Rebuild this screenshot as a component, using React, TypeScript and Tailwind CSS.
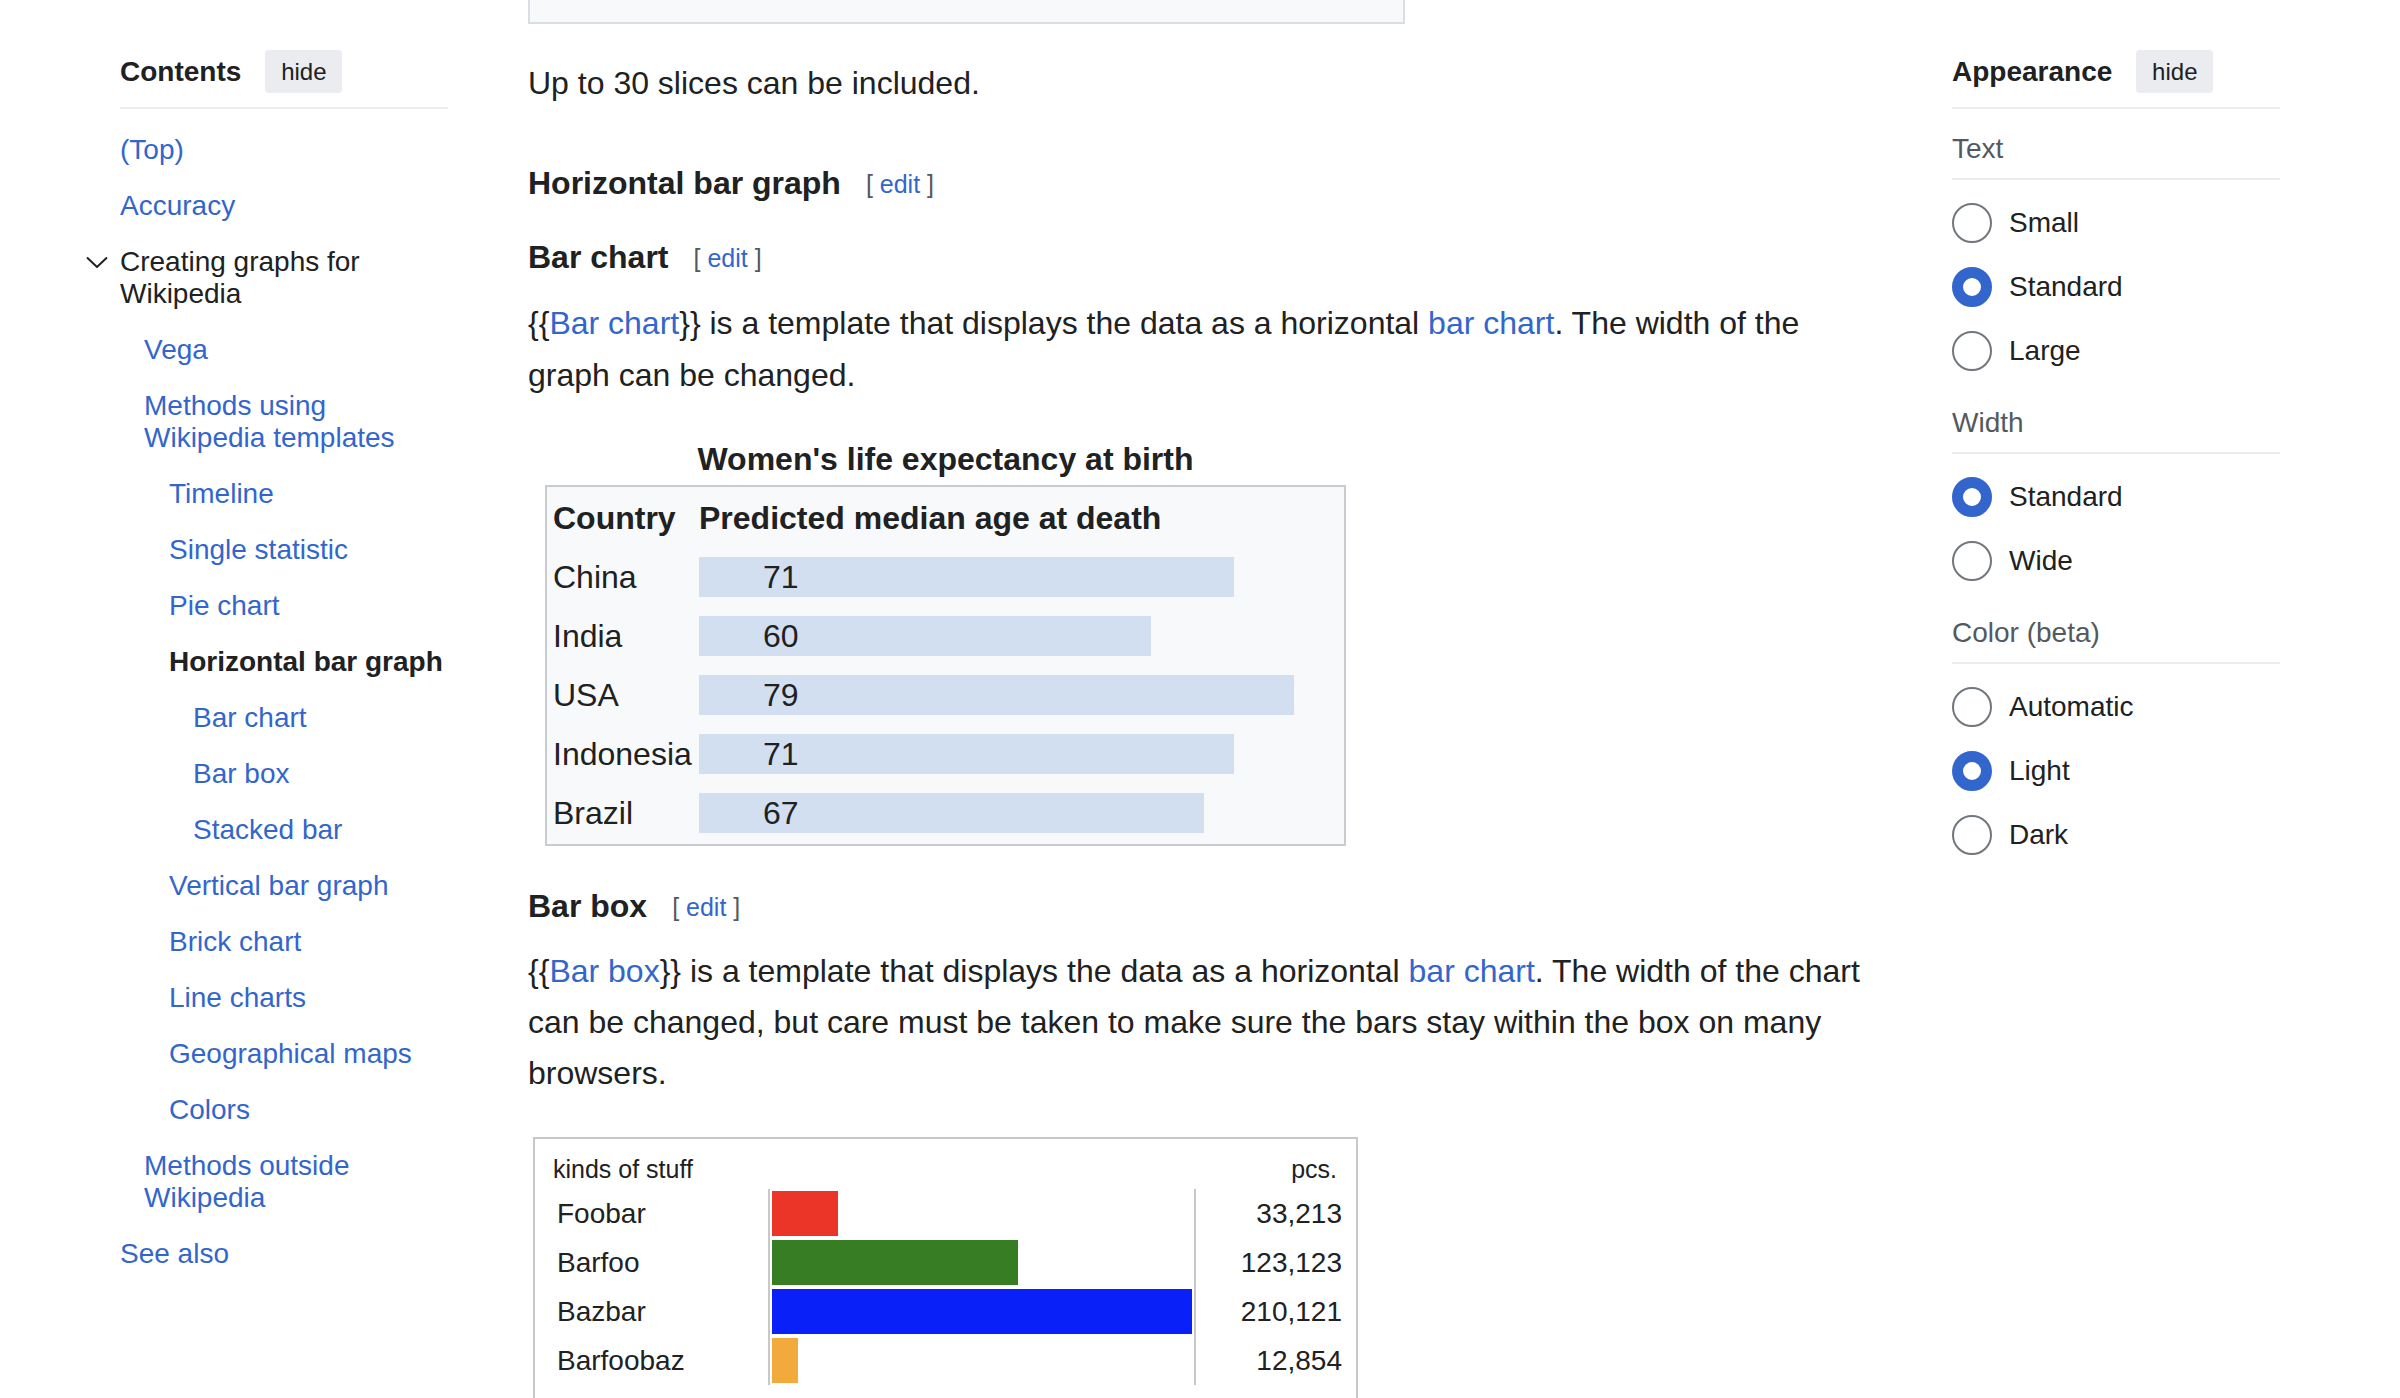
import React from 'react';

const toc = [
  { label: '(Top)', level: 1 },
  { label: 'Accuracy', level: 1 },
  { label: 'Creating graphs for Wikipedia', level: 1, parent: true },
  { label: 'Vega', level: 2 },
  { label: 'Methods using Wikipedia templates', level: 2 },
  { label: 'Timeline', level: 3 },
  { label: 'Single statistic', level: 3 },
  { label: 'Pie chart', level: 3 },
  { label: 'Horizontal bar graph', level: 3, active: true },
  { label: 'Bar chart', level: 4 },
  { label: 'Bar box', level: 4 },
  { label: 'Stacked bar', level: 4 },
  { label: 'Vertical bar graph', level: 3 },
  { label: 'Brick chart', level: 3 },
  { label: 'Line charts', level: 3 },
  { label: 'Geographical maps', level: 3 },
  { label: 'Colors', level: 3 },
  { label: 'Methods outside Wikipedia', level: 2 },
  { label: 'See also', level: 1 },
];

const indent: Record<number, string> = {
  1: 'pl-0',
  2: 'pl-[24px]',
  3: 'pl-[49px]',
  4: 'pl-[73px]',
};

const lifeExpectancy = [
  { country: 'China', age: 71 },
  { country: 'India', age: 60 },
  { country: 'USA', age: 79 },
  { country: 'Indonesia', age: 71 },
  { country: 'Brazil', age: 67 },
];

const stuff = [
  { name: 'Foobar', width: 66, color: 'bg-[#ea3528]', pcs: '33,213' },
  { name: 'Barfoo', width: 246, color: 'bg-[#377d23]', pcs: '123,123' },
  { name: 'Bazbar', width: 420, color: 'bg-[#0a20f8]', pcs: '210,121' },
  { name: 'Barfoobaz', width: 26, color: 'bg-[#f2aa3d]', pcs: '12,854' },
];

const HideButton = () => (
  <button className="h-[43px] w-[77px] rounded-[4px] bg-[#eaecf0] text-[24px] text-[#202122]">hide</button>
);

const PanelHeader = ({ title }: { title: string }) => (
  <>
    <div className="flex h-[43px] items-center gap-[24px]">
      <span className="text-[28px] font-bold text-[#202122]">{title}</span>
      <HideButton />
    </div>
    <div className="mt-[14px] h-[2px] bg-[#eaecf0]" />
  </>
);

const Heading = ({ title, className }: { title: string; className: string }) => (
  <div className={`flex items-center h-[48px] ${className}`}>
    <span className="text-[32px] font-bold text-[#202122]">{title}</span>
    <span className="ml-[25px] pt-[3px] text-[25px] text-[#54595d]">
      [ <span className="text-[#3366cc]">edit</span> ]
    </span>
  </div>
);

const Radio = ({ label, checked }: { label: string; checked?: boolean }) => (
  <div className="flex h-[40px] items-center">
    <span
      className={
        checked
          ? 'h-[40px] w-[40px] shrink-0 rounded-full border-[11px] border-[#3366cc] bg-white'
          : 'h-[40px] w-[40px] shrink-0 rounded-full border-2 border-[#72777d] bg-white'
      }
    />
    <span className="ml-[17px] text-[28px] text-[#202122]">{label}</span>
  </div>
);

const OptionGroup = ({ title, options, selected, first }: { title: string; options: string[]; selected: string; first?: boolean }) => (
  <div className={first ? 'mt-[24px]' : 'mt-[36px]'}>
    <div className="text-[28px] leading-[32px] text-[#54595d]">{title}</div>
    <div className="mt-[13px] h-[2px] bg-[#eaecf0]" />
    <div className="mt-[23px] flex flex-col gap-[24px]">
      {options.map((o) => (
        <Radio key={o} label={o} checked={o === selected} />
      ))}
    </div>
  </div>
);

export default function App() {
  return (
    <div className="h-[1398px] overflow-hidden bg-white font-['Liberation_Sans',Arial,sans-serif] text-[#202122]">
      <div className="flex pl-[120px]">
        {/* Contents */}
        <aside className="w-[328px] shrink-0 pt-[50px]">
          <PanelHeader title="Contents" />
          <ul className="mt-[13px]">
            {toc.map((item) => (
              <li key={item.label} className={`py-[12px] text-[28px] leading-[32px] ${indent[item.level]}`}>
                {item.parent ? (
                  <div className="-ml-[34px] flex">
                    <span className="flex h-[32px] w-[34px] shrink-0 items-center">
                      <svg width="22" height="12" viewBox="0 0 22 12" fill="none">
                        <path d="M1 1.5 L11 11 L21 1.5" stroke="#202122" strokeWidth="2" />
                      </svg>
                    </span>
                    <span className="text-[#202122]">{item.label}</span>
                  </div>
                ) : item.active ? (
                  <span className="font-bold text-[#202122]">{item.label}</span>
                ) : (
                  <span className="text-[#3366cc]">{item.label}</span>
                )}
              </li>
            ))}
          </ul>
        </aside>

        {/* Article */}
        <main className="ml-[80px] w-[1345px] shrink-0">
          <div className="h-[24px] w-[877px] border-2 border-t-0 border-[#dadde3] bg-[#f8f9fa]" />
          <p className="mt-[33px] text-[32px] leading-[52px]">Up to 30 slices can be included.</p>

          <Heading title="Horizontal bar graph" className="mt-[50px]" />
          <Heading title="Bar chart" className="mt-[26px]" />
          <p className="mt-[16px] text-[32px] leading-[52px]">
            {'{{'}
            <span className="text-[#3366cc]">Bar chart</span>
            {'}}'} is a template that displays the data as a horizontal{' '}
            <span className="text-[#3366cc]">bar chart</span>. The width of the graph can be changed.
          </p>

          <div className="ml-[17px] mt-[34px] w-[801px]">
            <div className="text-center text-[32px] font-bold leading-[48px]">Women's life expectancy at birth</div>
            <div className="mt-[2px] border-2 border-[#c8ccd1] bg-[#f8f9fa] py-[2px] text-[32px]">
              <div className="flex h-[58px] items-center font-bold">
                <span className="w-[152px] pl-[6px]">Country</span>
                <span>Predicted median age at death</span>
              </div>
              {lifeExpectancy.map((r) => (
                <div key={r.country} className="flex h-[59px] items-center">
                  <span className="w-[152px] shrink-0 pl-[6px]">{r.country}</span>
                  <div className="flex h-[40px] items-center bg-[#d2dff0]" style={{ width: r.age * 7.53 }}>
                    <span className="pl-[64px]">{r.age}</span>
                  </div>
                </div>
              ))}
            </div>
          </div>

          <Heading title="Bar box" className="mt-[36px]" />
          <p className="mt-[16px] text-[32px] leading-[51px]">
            {'{{'}
            <span className="text-[#3366cc]">Bar box</span>
            {'}}'} is a template that displays the data as a horizontal{' '}
            <span className="text-[#3366cc]">bar chart</span>. The width of the chart can be changed, but care must be
            taken to make sure the bars stay within the box on many browsers.
          </p>

          <div className="ml-[5px] mt-[38px] w-[825px] border-2 border-[#c8c8c8] pb-[20px]">
            <div className="flex h-[50px] justify-between pl-[18px] pr-[19px] pt-[15px] text-[25px] leading-[30px]">
              <span>kinds of stuff</span>
              <span>pcs.</span>
            </div>
            {stuff.map((s) => (
              <div key={s.name} className="flex h-[49px] text-[28px]">
                <span className="flex w-[233px] shrink-0 items-center pl-[22px]">{s.name}</span>
                <div className="flex w-[428px] shrink-0 items-center border-x-2 border-[#c8c8c8] pl-[2px]">
                  <div className={`h-[45px] ${s.color}`} style={{ width: s.width }} />
                </div>
                <span className="flex flex-1 items-center justify-end pr-[14px]">{s.pcs}</span>
              </div>
            ))}
          </div>
        </main>

        {/* Appearance */}
        <aside className="ml-[79px] w-[328px] shrink-0 pt-[50px]">
          <PanelHeader title="Appearance" />
          <OptionGroup first title="Text" options={['Small', 'Standard', 'Large']} selected="Standard" />
          <OptionGroup title="Width" options={['Standard', 'Wide']} selected="Standard" />
          <OptionGroup title="Color (beta)" options={['Automatic', 'Light', 'Dark']} selected="Light" />
        </aside>
      </div>
    </div>
  );
}
